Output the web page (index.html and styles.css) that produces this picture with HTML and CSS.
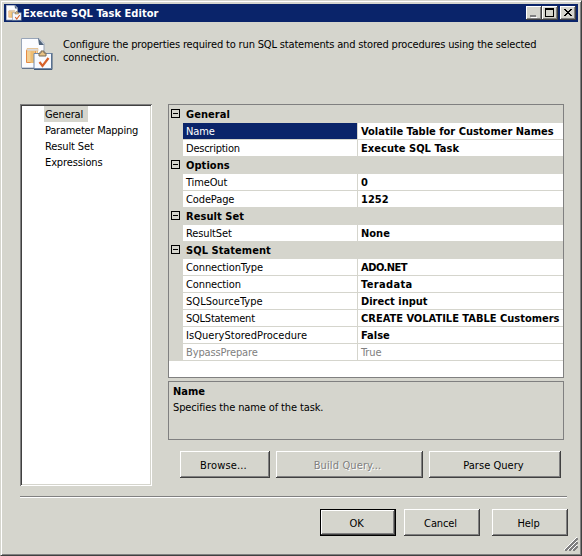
FILE: index.html
```html
<!DOCTYPE html>
<html lang="en">
<head>
<meta charset="utf-8">
<title>Execute SQL Task Editor</title>
<link rel="stylesheet" href="styles.css">
</head>
<body>
<svg class="defs" width="0" height="0" aria-hidden="true">
  <symbol id="task" viewBox="0 0 32 32">
    <path d="M.5.5H18l5 5V30H.5z" fill="#fbfcff" stroke="#98a5b8"/>
    <path d="M17 0l6 7h-5z" fill="#50647c"/>
    <path d="M1 30.500h13" stroke="#63738b"/>
    <path d="M5.500 12v12.500h9V12z" fill="#f3cf94" stroke="#e58a45"/>
    <path d="M6 10h11v6h-1.500v-3h-2v12h-4V13H6z" fill="#edbd72"/>
    <path d="M6 10.500h11v2.500H6z" fill="#d9d9dc" stroke="#eac088" stroke-width=".6"/>
    <path d="M13 15.500h17.500v15H13z" fill="#f8faff" stroke="#7089ab"/>
    <path d="M31 15v16.500H13" fill="none" stroke="#405877"/>
    <path d="M18 15h2v-2h3v2h2v3h-7z" fill="#e7c184" stroke="#756955"/>
    <path d="M18.500 24l3 4 6-8" fill="none" stroke="#d6612b" stroke-width="2.200"/>
  </symbol>
</svg>
<div class="window">
  <header class="titlebar">
    <svg class="small-icon"><use href="#task"/></svg>
    <h1><span class="t title-text">Execute SQL Task Editor</span></h1>
    <div class="controls">
      <span class="control"><svg viewBox="0 0 16 14" shape-rendering="crispEdges"><path d="M5 11h6v1H5z" fill="#fff"/><path d="M4 9h6v2H4z" fill="#808080"/></svg></span>
      <span class="control"><svg viewBox="0 0 16 14" shape-rendering="crispEdges"><path d="M3 2h9v9H3zM4 4v6h7V4z" fill="#000" fill-rule="evenodd"/></svg></span>
      <span class="control close"><svg viewBox="0 0 16 14" shape-rendering="crispEdges"><path d="M4 3h2v1h1v1h2V4h1V3h2v1h-1v1h-1v1H9v1h1v1h1v1h1v1h-2V9H9V8H7v1H6v1H4V9h1V8h1V7h1V6H6V5H5V4H4z" fill="#000"/></svg></span>
    </div>
  </header>
  <section class="intro">
    <svg class="large-icon"><use href="#task"/></svg>
    <p><span class="t intro-a">Configure the properties required to run SQL statements and stored procedures using the selected</span><br><span class="t">connection.</span></p>
  </section>
  <main>
    <nav><span class="t selected">General</span><span class="t tight">Parameter Mapping</span><span class="t">Result Set</span><span class="t">Expressions</span></nav>
    <div class="content">
      <div class="grid">
        <div class="category"><i></i><b class="t">General</b></div>
        <div class="row active"><span class="t">Name</span><b class="t">Volatile Table for Customer Names</b></div>
        <div class="row"><span class="t tight">Description</span><b class="t loose">Execute SQL Task</b></div>
        <div class="category"><i></i><b class="t">Options</b></div>
        <div class="row"><span class="t">TimeOut</span><b class="t">0</b></div>
        <div class="row"><span class="t">CodePage</span><b class="t">1252</b></div>
        <div class="category"><i></i><b class="t">Result Set</b></div>
        <div class="row"><span class="t">ResultSet</span><b class="t">None</b></div>
        <div class="category"><i></i><b class="t">SQL Statement</b></div>
        <div class="row"><span class="t">ConnectionType</span><b class="t tighter">ADO.NET</b></div>
        <div class="row"><span class="t">Connection</span><b class="t looser">Teradata</b></div>
        <div class="row"><span class="t loose">SQLSourceType</span><b class="t">Direct input</b></div>
        <div class="row"><span class="t tight">SQLStatement</span><b class="t">CREATE VOLATILE TABLE Customers</b></div>
        <div class="row"><span class="t loose">IsQueryStoredProcedure</span><b class="t">False</b></div>
        <div class="row muted"><span class="t">BypassPrepare</span><span class="t">True</span></div>
      </div>
      <div class="help"><b class="t">Name</b><span class="t">Specifies the name of the task.</span></div>
      <div class="actions"><button class="browse">Browse...</button><button class="build" disabled>Build Query...</button><button class="parse">Parse Query</button></div>
    </div>
  </main>
  <hr>
  <footer><button class="default">OK</button><button>Cancel</button><button class="help-button">Help</button></footer>
  <svg class="grip" viewBox="0 0 14 14" shape-rendering="crispEdges"><path d="M0 13L13 0M4 13l9-9M8 13l5-5" stroke="#fff"/><path d="M1 13.500L13.500 1M2 13.500L13.500 2M5 13.500L13.500 5M6 13.500L13.500 6M9 13.500L13.500 9M10 13.500l3.500-3.500" stroke="#808080"/></svg>
</div>
</body>
</html>
```

FILE: styles.css
```css
* { box-sizing: border-box; }
body { margin: 0; }
.defs { position: absolute; }
.window {
  position: relative;
  width: 582px;
  height: 556px;
  padding: 3px 2px 0 3px;
  background: #d5d5cd;
  border: 1px solid;
  border-color: #d5d5cd #404040 #404040 #d5d5cd;
  box-shadow: inset 1px 1px #fff, inset -1px -1px #808080;
  font: 11px/16px Tahoma, "DejaVu Sans Condensed", "DejaVu Sans", sans-serif;
  font-stretch: condensed;
  letter-spacing: -0.12px;
  color: #000;
  overflow: hidden;
}
.t { white-space: nowrap; }
b { letter-spacing: 0; }
.tight { letter-spacing: -0.24px; }
.tighter { letter-spacing: -0.5px; }
.loose { letter-spacing: 0.04px; }
.looser { letter-spacing: 0.35px; }
.titlebar {
  display: flex;
  width: 574px;
  height: 18px;
  padding: 1px 2px;
  background: #0a246a;
  color: #fff;
}
.small-icon { width: 16px; height: 16px; }
h1 { margin: 0 0 0 1px; font: inherit; font-weight: bold; line-height: 18px; letter-spacing: 0.04px; }
.controls { display: flex; height: 14px; margin: 1px 0 0 auto; }
.control {
  width: 16px;
  height: 14px;
  background: #d5d5cd;
  box-shadow: inset -1px -1px #404040, inset 1px 1px #fff, inset -2px -2px #808080;
}
.control svg { display: block; width: 16px; height: 14px; }
.close { margin-left: 2px; }
.intro { display: flex; gap: 10px; height: 82px; padding: 16px 0 0 17px; }
.large-icon { width: 32px; height: 32px; }
.intro p { margin: 0; line-height: 13px; }
.intro-a { letter-spacing: -0.165px; }
main { display: flex; gap: 16px; height: 382px; margin-left: 16px; }
nav {
  display: flex;
  flex-direction: column;
  align-items: flex-start;
  width: 132px;
  padding: 2px 2px 2px 24px;
  background: #fff;
  box-shadow: inset 1px 1px #808080, inset -1px -1px #fff, inset 2px 2px #404040, inset -2px -2px #d5d5cd;
}
nav span { height: 16px; padding: 0 1px; line-height: 18px; }
.selected { width: 44px; background: #d5d5cd; }
.content { width: 396px; }
.grid { height: 274px; padding-top: 1px; background: #fff; border: 1px solid #808080; box-shadow: inset 0 1px #d5d5cd; }
.category, .row { display: grid; height: 17px; background: #d5d5cd; }
.category { grid-template-columns: 14px 1fr; line-height: 18px; }
.category b { padding-left: 3px; letter-spacing: 0.06px; }
.category i {
  width: 9px;
  height: 9px;
  margin: 3px 0 0 2px;
  border: 1px solid #000;
  background: linear-gradient(#000, #000) center / 5px 1px no-repeat;
}
.row { grid-template-columns: 174px 1fr; gap: 1px; padding: 0 0 1px 14px; line-height: 18px; }
.row .t { height: 16px; padding-left: 3px; background: #fff; overflow: hidden; }
.row.active span { background: #0a246a; color: #fff; }
.row.muted .t { color: #808080; }
.help { display: flex; flex-direction: column; height: 59px; margin-top: 3px; padding: 2px 4px; border: 1px solid #808080; }
.actions { display: flex; gap: 6px; margin: 11px 0 0 12px; }
button {
  width: 76px;
  height: 27px;
  padding: 2px 3px 0 0;
  border: 0;
  background: #d5d5cd;
  box-shadow: inset -1px -1px #404040, inset 1px 1px #fff, inset -2px -2px #808080;
  font: inherit;
  letter-spacing: inherit;
  color: #000;
}
.browse { width: 90px; letter-spacing: 0.15px; }
.build { width: 147px; padding-right: 4px; letter-spacing: 0.12px; }
.parse { width: 132px; letter-spacing: 0.04px; }
button:disabled { color: #808080; text-shadow: 1px 1px #fff; }
hr { width: 547px; height: 2px; margin: 10px 0 11px 16px; border: 0; border-top: 1px solid #808080; border-bottom: 1px solid #fff; }
footer { display: flex; gap: 8px; margin-left: 316px; }
.default { box-shadow: inset 0 0 0 1px #000, inset -2px -2px #404040, inset 2px 2px #fff, inset -3px -3px #808080; }
.help-button { margin-left: 4px; }
.grip { position: absolute; right: 3px; bottom: 4px; width: 14px; height: 14px; }
```
